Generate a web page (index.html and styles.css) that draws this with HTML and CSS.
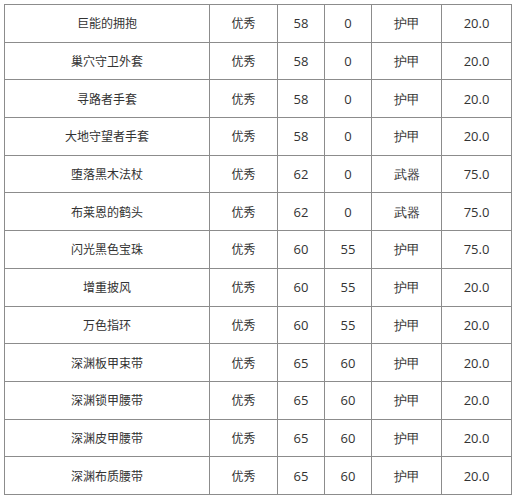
FILE: index.html
```html
<!DOCTYPE html>
<html lang="zh">
<head>
<meta charset="utf-8">
<link rel="stylesheet" href="styles.css">
</head>
<body>
<table class="gear">
<colgroup>
<col class="c-name"><col class="c-q"><col class="c-lv"><col class="c-req"><col class="c-type"><col class="c-val">
</colgroup>
<tbody>
<tr><td>巨能的拥抱</td><td>优秀</td><td>58</td><td>0</td><td>护甲</td><td>20.0</td></tr>
<tr><td>巢穴守卫外套</td><td>优秀</td><td>58</td><td>0</td><td>护甲</td><td>20.0</td></tr>
<tr><td>寻路者手套</td><td>优秀</td><td>58</td><td>0</td><td>护甲</td><td>20.0</td></tr>
<tr><td>大地守望者手套</td><td>优秀</td><td>58</td><td>0</td><td>护甲</td><td>20.0</td></tr>
<tr><td>堕落黑木法杖</td><td>优秀</td><td>62</td><td>0</td><td>武器</td><td>75.0</td></tr>
<tr><td>布莱恩的鹤头</td><td>优秀</td><td>62</td><td>0</td><td>武器</td><td>75.0</td></tr>
<tr><td>闪光黑色宝珠</td><td>优秀</td><td>60</td><td>55</td><td>护甲</td><td>75.0</td></tr>
<tr><td>增重披风</td><td>优秀</td><td>60</td><td>55</td><td>护甲</td><td>20.0</td></tr>
<tr><td>万色指环</td><td>优秀</td><td>60</td><td>55</td><td>护甲</td><td>20.0</td></tr>
<tr><td>深渊板甲束带</td><td>优秀</td><td>65</td><td>60</td><td>护甲</td><td>20.0</td></tr>
<tr><td>深渊锁甲腰带</td><td>优秀</td><td>65</td><td>60</td><td>护甲</td><td>20.0</td></tr>
<tr><td>深渊皮甲腰带</td><td>优秀</td><td>65</td><td>60</td><td>护甲</td><td>20.0</td></tr>
<tr><td>深渊布质腰带</td><td>优秀</td><td>65</td><td>60</td><td>护甲</td><td>20.0</td></tr>
</tbody>
</table>
</body>
</html>
```
FILE: styles.css
```css
html, body {
  margin: 0;
  padding: 0;
  background: #ffffff;
}
body {
  padding: 4px 0 0 4px;
  font-family: "Noto Sans CJK SC", "Noto Sans", sans-serif;
  font-size: 12px;
  color: #333333;
}
.gear {
  border-collapse: collapse;
  table-layout: fixed;
  width: 508px;
}
.gear td {
  border: 1px solid #8c8c8c;
  height: 36.7px;
  padding: 0;
  text-align: center;
  vertical-align: middle;
  line-height: 16px;
}
.gear td:nth-child(n+3) {
  font-family: "Open Sans", "Noto Sans", sans-serif;
  font-size: 13px;
}
.c-name { width: 205px; }
.c-q { width: 68px; }
.c-lv { width: 47px; }
.c-req { width: 47px; }
.c-type { width: 70px; }
.c-val { width: 70px; }
```
